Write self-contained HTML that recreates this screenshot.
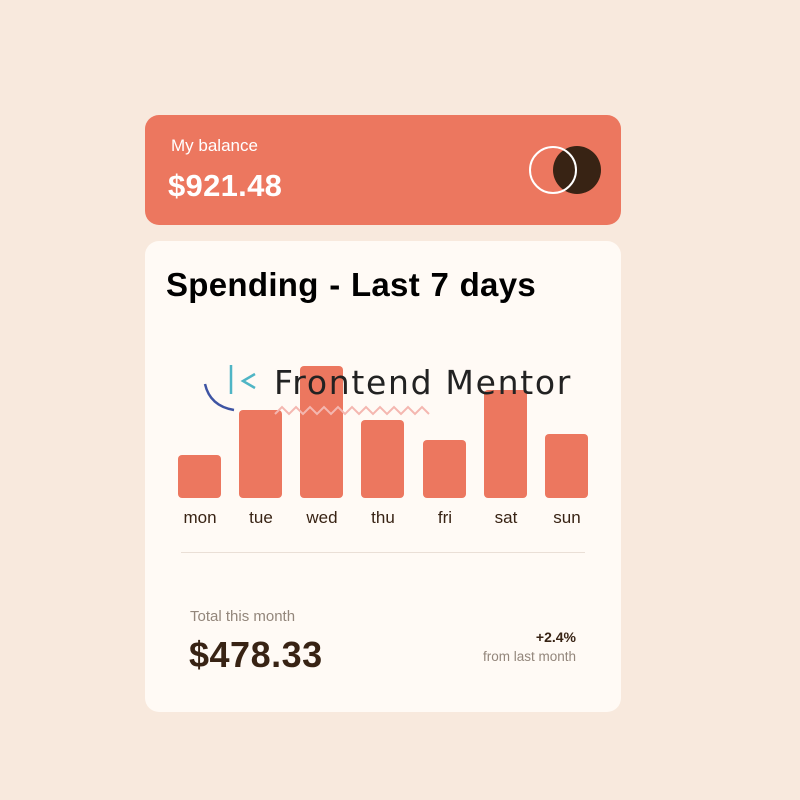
<!DOCTYPE html>
<html><head><style>
*{margin:0;padding:0;box-sizing:border-box}
body{width:800px;height:800px;background:#f8e9dd;font-family:"Liberation Sans",sans-serif;position:relative;overflow:hidden}
.top{position:absolute;left:145px;top:115px;width:476px;height:110px;background:#ec775f;border-radius:14px;color:#fff}
.top .l{position:absolute;left:26px;top:21px;font-size:17px}
.top .v{position:absolute;left:23px;top:53px;font-size:31px;font-weight:bold;letter-spacing:0.3px}
.card{position:absolute;left:145px;top:241px;width:476px;height:471px;background:#fffaf5;border-radius:14px}
h1{position:absolute;left:21px;top:25px;font-size:33px;color:#000;font-weight:bold;letter-spacing:0.3px;word-spacing:1px}
.bar{position:absolute;width:43px;background:#ec775f;border-radius:4px;bottom:214px}
.day{position:absolute;top:267px;width:60px;text-align:center;font-size:17px;color:#382314}
.hr{position:absolute;left:36px;right:36px;top:311px;height:1px;background:#eadfd6}
.t{position:absolute;left:45px;top:367px;font-size:15px;color:#93867b}
.a{position:absolute;left:44px;top:393px;font-size:36px;font-weight:bold;color:#382314;letter-spacing:0.5px}
.p{position:absolute;right:45px;top:388px;font-size:14px;font-weight:bold;color:#382314}
.f{position:absolute;right:45px;top:408px;font-size:13.5px;color:#93867b}
.logo{position:absolute;left:274px;top:363px;font-family:"DejaVu Sans",sans-serif;font-size:33px;color:#222;letter-spacing:1.7px}
</style></head><body>
<div class="top"><div class="l">My balance</div><div class="v">$921.48</div>
<svg style="position:absolute;left:380px;top:30px" width="80" height="50"><circle cx="52" cy="25" r="24" fill="#382314"/><circle cx="28" cy="25" r="23" fill="none" stroke="#fff" stroke-width="2"/></svg></div>
<div class="card">
<h1>Spending - Last 7 days</h1>
<div class="bar" style="left:33px;height:43px"></div>
<div class="bar" style="left:94px;height:88px"></div>
<div class="bar" style="left:155px;height:132px"></div>
<div class="bar" style="left:216px;height:78px"></div>
<div class="bar" style="left:278px;height:58px"></div>
<div class="bar" style="left:339px;height:108px"></div>
<div class="bar" style="left:400px;height:64px"></div>
<div class="day" style="left:25px">mon</div>
<div class="day" style="left:86px">tue</div>
<div class="day" style="left:147px">wed</div>
<div class="day" style="left:208px">thu</div>
<div class="day" style="left:270px">fri</div>
<div class="day" style="left:331px">sat</div>
<div class="day" style="left:392px">sun</div>
<div class="hr"></div>
<div class="t">Total this month</div>
<div class="a">$478.33</div>
<div class="p">+2.4%</div>
<div class="f">from last month</div>
</div>
<svg style="position:absolute;left:200px;top:362px" width="270" height="60">
<path d="M5 22 Q10 44 34 48" fill="none" stroke="#3e54a3" stroke-width="2.5"/>
<line x1="31" y1="3" x2="31" y2="32" stroke="#4fb5c5" stroke-width="2.5"/>
<path d="M55 12 L43 19 L55 26" fill="none" stroke="#4fb5c5" stroke-width="2.5"/>
<path d="M75 52 l7-7 l7 7 l7-7 l7 7 l7-7 l7 7 l7-7 l7 7 l7-7 l7 7 l7-7 l7 7 l7-7 l7 7 l7-7 l7 7 l7-7 l7 7 l7-7 l7 7 l7-7 l7 7" fill="none" stroke="#f4b7b0" stroke-width="2"/>
</svg>
<div class="logo">Frontend Mentor</div>
</body></html>
